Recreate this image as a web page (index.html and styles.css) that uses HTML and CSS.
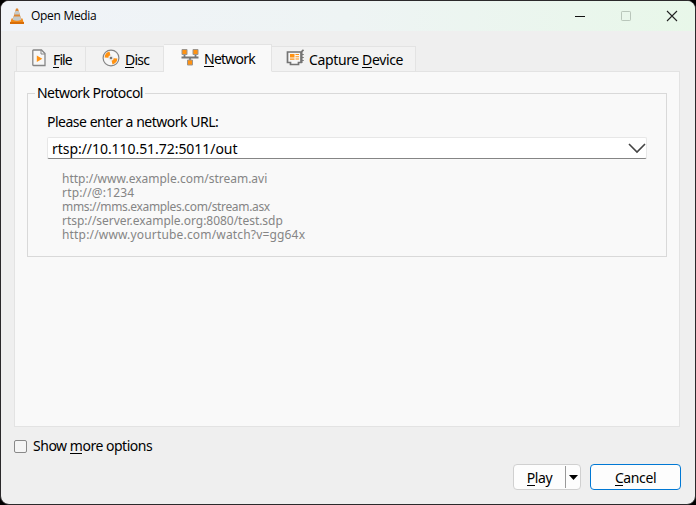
FILE: index.html
```html
<!DOCTYPE html>
<html lang="en">
<head>
<meta charset="utf-8">
<title>Open Media</title>
<link rel="stylesheet" href="styles.css">
</head>
<body>
<div class="window">
  <header class="titlebar">
    <svg class="cone" width="16" height="17" viewBox="0 0 16 17">
      <path d="M2.500 10.500h11L15 16H1z" fill="#f28a18"/><path d="M1 14h14v2H1z" fill="#d86d08"/>
      <path d="M7 .5h2l3.300 11q-4.300 3-8.600 0z" fill="#dd8632"/>
      <path d="M6.300 3h3.400l1 3.500H5.300zM4.600 8.500h6.800l.9 3.200q-4.300 2.300-8.600 0z" fill="#c5caca"/>
    </svg>
    <span class="title">Open Media</span>
    <div class="controls">
      <svg width="12" height="12" viewBox="0 0 12 12"><path d="M1 6.500h10" stroke="#111"/></svg>
      <svg width="12" height="12" viewBox="0 0 12 12"><rect x="1.500" y="1.500" width="9" height="9" rx=".7" fill="none" stroke="#b9c6bb"/></svg>
      <svg width="12" height="12" viewBox="0 0 12 12"><path d="M1 1l10 10M11 1L1 11" stroke="#222" stroke-width="1.100"/></svg>
    </div>
  </header>
  <main class="content">
    <nav class="tabs">
      <div class="tab tab-file">
        <svg width="14" height="18" viewBox="0 0 14 18"><path d="M1.500 1h8L13 4.500V16.500H1.500q-.7 0-.7-.7V1.700q0-.7.7-.7z" fill="#f7f7f7" stroke="#858585" stroke-width="1.300"/><path d="M9 1v4h4" fill="none" stroke="#858585"/><path d="M4.800 6.500l5.500 3.300-5.500 3.300z" fill="#ff9212"/></svg>
        <span class="label"><u>F</u>ile</span>
      </div>
      <div class="tab tab-disc">
        <svg width="18" height="18" viewBox="0 0 18 18"><circle cx="9" cy="9" r="7.900" fill="#f7f7f7" stroke="#858585" stroke-width="1.200"/><path d="M9 9L2.600 8.500A6.500 6.500 0 0 1 7.500 2.600zM9 9l6.400 .5A6.500 6.500 0 0 1 10.500 15.400z" fill="#ff9212"/><circle cx="9" cy="9" r="2.700" fill="#ededed"/><circle cx="9" cy="9" r="1.300" fill="#777"/></svg>
        <span class="label"><u>D</u>isc</span>
      </div>
      <div class="tab tab-network active">
        <svg width="18" height="18" viewBox="0 0 18 18"><path d="M3.500 6v3.500M14.500 6v3.500M9 9v4M.5 9.500h17" fill="none" stroke="#777" stroke-width="1.800"/><g fill="#ff9212" stroke="#9c958c"><path d="M1 1.500h5v5H1zM12 1.500h5v5h-5zM6.500 12h5v5h-5z"/></g></svg>
        <span class="label"><u>N</u>etwork</span>
      </div>
      <div class="tab tab-capture">
        <svg width="18" height="18" viewBox="0 0 18 18"><path d="M1.500 3h13.500v10.500h-2.500V15.500H4.500v-2H1.500zM17.500 .8L15.700 2.600V14" fill="#f7f7f7" stroke="#737373" stroke-width="1.700"/><path d="M15.500 5.500H17.800M15.500 8.500H17.800M15.500 11.500H17.800" stroke="#777"/><path d="M4 5h4.500v3.500H4zM4 9.500h4.500v1.200H4zM9.500 5H13v1H9.500zM9.500 7.200H13v1H9.500zM9.500 9.500H13v1H9.500z" fill="#ff9212"/></svg>
        <span class="label">Capture <u>D</u>evice</span>
      </div>
    </nav>
    <section class="panel">
      <fieldset class="protocol">
        <legend><span class="label legend-text">Network Protocol</span></legend>
        <label class="prompt"><span class="label prompt-text">Please enter a network URL:</span></label>
        <div class="combo">
          <span class="label url">rtsp://10.110.51.72:5011/out</span>
          <svg width="18" height="12" viewBox="0 0 18 12"><path d="M1 2l8 8 8-8" fill="none" stroke="#444" stroke-width="1.600"/></svg>
        </div>
        <div class="examples">
          <div><span class="e1">http://www.example.com/stream.avi</span></div>
          <div><span class="e2">rtp://@:1234</span></div>
          <div><span class="e3">mms://mms.examples.com/stream.asx</span></div>
          <div><span class="e4">rtsp://server.example.org:8080/test.sdp</span></div>
          <div><span class="e5">http://www.yourtube.com/watch?v=gg64x</span></div>
        </div>
      </fieldset>
    </section>
    <div class="more"><span class="checkbox"></span><span class="label more-text">Show <u>m</u>ore options</span></div>
    <footer class="actions">
      <div class="button play"><span class="play-main"><span class="label"><u>P</u>lay</span></span><span class="play-menu"><svg width="9" height="5" viewBox="0 0 9 5"><path d="M0 0h9L4.500 5z"/></svg></span></div>
      <div class="button cancel"><span class="label"><u>C</u>ancel</span></div>
    </footer>
  </main>
</div>
</body>
</html>
```
FILE: styles.css
```css
* { box-sizing: border-box; }
body { margin: 0; background: #000; color: #000; font: 14px/18px "Noto Sans", sans-serif; }
svg { display: block; flex: none; }
u { text-decoration: none; box-shadow: inset 0 -1px #000; display: inline-block; height: 17px; line-height: 18px; vertical-align: top; }
.label { white-space: nowrap; letter-spacing: -0.4px; }
.window { width: 696px; height: 505px; border: 1px solid #2b292b; border-radius: 9px; background: #efefef; overflow: hidden; }
.titlebar { height: 30px; display: flex; align-items: center; padding: 0 17px 0 8px; background: linear-gradient(90deg, #f0f3f8, #eef4f4 50%, #e8f7e9); }
.title { margin-left: 6px; font: 12px/18px "Open Sans", sans-serif; letter-spacing: -0.3px; }
.controls { margin-left: auto; display: flex; gap: 34px; }
.content { padding: 13px 15px 0 13px; }
.tabs { display: flex; align-items: flex-end; height: 28px; padding-left: 2px; position: relative; margin-bottom: -1px; }
.tab { height: 26px; display: flex; align-items: center; border: 1px solid #e3e3e3; border-left: 0; background: #f2f2f2; }
.tab svg { margin-top: -3px; }
.tab .label { margin-left: 7px; padding-top: 2px; }
.tab-file { width: 70px; padding-left: 15px; border-left: 1px solid #e3e3e3; }
.tab-file .label { letter-spacing: -0.9px; }
.tab-disc { width: 78px; padding-left: 16px; }
.tab-disc .label { margin-left: 5px; letter-spacing: -0.8px; }
.tab-network { width: 108px; padding-left: 17px; }
.tab-network .label { margin-left: 5px; letter-spacing: -0.75px; }
.tab-capture { width: 144px; padding-left: 14px; }
.tab-capture .label { margin-left: 5px; letter-spacing: -0.37px; }
.active { height: 28px; background: #f9f9f9; border-bottom-color: #f9f9f9; }
.panel { height: 356px; border: 1px solid #e3e3e3; background: #f9f9f9; padding: 12px; }
.protocol { display: block; min-width: 0; height: 173px; margin: 0; padding: 0 19px; border: 1px solid #d9d9d9; }
legend { margin-left: -12px; padding: 0 2px; height: 18px; }
.legend-text { letter-spacing: -0.55px; }
.prompt { display: block; height: 18px; margin-top: 11px; }
.prompt-text { letter-spacing: -0.49px; }
.combo { height: 22px; margin-top: 6px; padding: 0 0 0 4px; display: flex; align-items: center; justify-content: space-between; background: #fff; border: 1px solid #e7e7e7; border-bottom-color: #858585; border-radius: 2px; }
.url { letter-spacing: -0.05px; padding-top: 2px; }
.examples { margin: 13px 0 0 15px; font-size: 12px; line-height: 14px; color: #858585; white-space: nowrap; }
.e2 { letter-spacing: 0.17px; }
.e3 { letter-spacing: -0.34px; }
.e4 { letter-spacing: -0.03px; }
.e5 { letter-spacing: 0.17px; }
.more { height: 18px; margin-top: 10px; display: flex; align-items: center; }
.more-text { letter-spacing: -0.48px; }
.checkbox { width: 13px; height: 13px; border: 1px solid #898989; border-radius: 2px; background: #f5f5f5; margin-right: 6px; }
.actions { display: flex; justify-content: flex-end; gap: 9px; margin: 9px -1px 0 0; }
.button { height: 26px; display: flex; align-items: center; justify-content: center; border: 1px solid #d0d0d0; border-radius: 4px; background: #fdfdfd; }
.button .label { padding-top: 2px; }
.play { width: 68px; }
.play-main { width: 52px; height: 22px; display: flex; align-items: center; justify-content: center; border-right: 1px solid #999; }
.play-menu { width: 14px; display: flex; justify-content: center; }
.cancel { width: 91px; border-color: #0078d4; }
```
